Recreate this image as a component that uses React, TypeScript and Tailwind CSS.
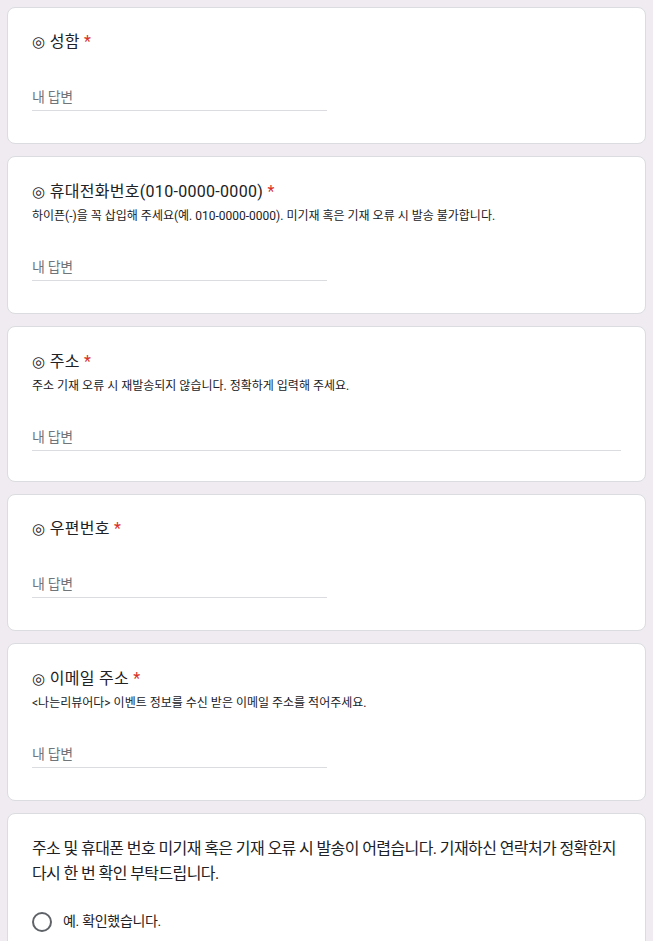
import React from 'react';

const font = { fontFamily: 'Roboto, "Noto Sans CJK KR", sans-serif' };

type Question = {
  title: string;
  desc?: string;
  wide?: boolean;
  tight?: boolean;
};

const questions: Question[] = [
  { title: '성함' },
  {
    title: '휴대전화번호(010-0000-0000)',
    desc: '하이픈(-)을 꼭 삽입해 주세요(예. 010-0000-0000). 미기재 혹은 기재 오류 시 발송 불가합니다.',
  },
  { title: '주소', desc: '주소 기재 오류 시 재발송되지 않습니다. 정확하게 입력해 주세요.', wide: true, tight: true },
  { title: '우편번호' },
  { title: '이메일 주소', desc: '<나는리뷰어다> 이벤트 정보를 수신 받은 이메일 주소를 적어주세요.' },
];

const QuestionCard: React.FC<{ q: Question }> = ({ q }) => (
  <div
    className={`bg-white border border-[#dadce0] rounded-lg px-6 ${q.tight ? 'pb-[30px]' : 'pb-[32px]'} ${
      q.desc ? 'pt-[23px]' : 'pt-[22px]'
    }`}
  >
    <div className="text-[16px] leading-6 text-[#202124] tracking-[0.3px]">
      <span className="font-['DejaVu_Sans'] text-[15px]">◎</span> {q.title} <span className="text-[#d93025]">*</span>
    </div>
    {q.desc && <div className="text-[12px] leading-[18px] text-[#202124] mt-[3px]">{q.desc}</div>}
    <div className={`${q.desc ? 'mt-[32px]' : 'mt-[33px]'} ${q.wide ? 'w-full' : 'w-[295px]'} border-b border-[#dadce0] pb-[3px]`}>
      <div className="text-[14px] leading-[20px] text-[#70757a] tracking-[-0.3px]">내 답변</div>
    </div>
  </div>
);

export default function App() {
  return (
    <div className="min-h-screen bg-[#f0ebf1] px-[7px] pt-[7px] flex flex-col gap-[12px]" style={font}>
      {questions.map((q, i) => (
        <QuestionCard key={i} q={q} />
      ))}
      <div className="bg-white border border-[#dadce0] rounded-lg px-6 pt-[22px] pb-6">
        <div className="text-[16px] leading-[25px] text-[#202124] tracking-[-0.6px]">
          주소 및 휴대폰 번호 미기재 혹은 기재 오류 시 발송이 어렵습니다. 기재하신 연락처가 정확한지 다시 한 번 확인 부탁드립니다.
        </div>
        <div className="mt-[25px] flex items-center gap-[11px]">
          <div className="w-5 h-5 rounded-full border-2 border-[#5f6368]" />
          <span className="text-[14px] text-[#202124] tracking-[-0.3px]">예. 확인했습니다.</span>
        </div>
      </div>
    </div>
  );
}
